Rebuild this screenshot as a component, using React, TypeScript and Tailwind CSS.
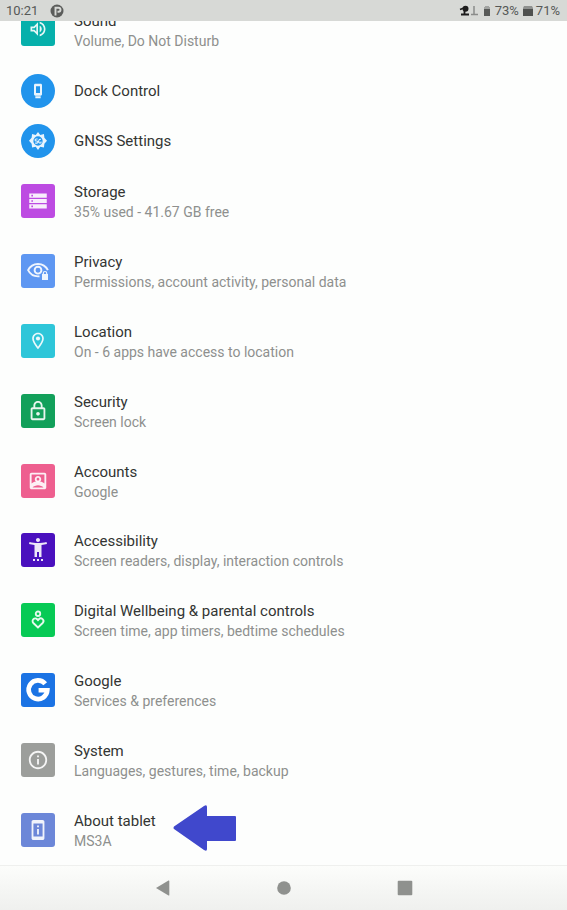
import type { ReactNode } from "react";

type Item = {
  title: string;
  summary: string;
  color: string;
  icon: ReactNode;
  pointed?: boolean;
};

function Glyph({ children, size = "size-5" }: { children: ReactNode; size?: string }) {
  return (
    <svg viewBox="0 0 24 24" className={size} fill="currentColor" aria-hidden="true">
      {children}
    </svg>
  );
}

const volumeIcon = (
  <Glyph>
    <path d="M3 9v6h4l5 5V4L7 9H3zm7-.17v6.34L7.83 13H5v-2h2.83L10 8.83zM16.5 12c0-1.77-1.02-3.29-2.5-4.03v8.05c1.48-.73 2.5-2.25 2.5-4.02zM14 3.23v2.06c2.89.86 5 3.54 5 6.71s-2.11 5.85-5 6.71v2.06c4.01-.91 7-4.49 7-8.77s-2.99-7.86-7-8.77z" />
  </Glyph>
);

const dockIcon = (
  <Glyph size="size-4">
    <path d="M8 23h8v-3H8v3zm8-21.99L8 1c-1.1 0-2 .9-2 2v14c0 1.1.9 2 2 2h8c1.1 0 2-.9 2-2V3c0-1.1-.9-1.99-2-1.99zM15 15H9V5h6v10z" />
  </Glyph>
);

const gnssIcon = (
  <Glyph size="size-[18px]">
    <path
      fillRule="evenodd"
      d="M12 0l3 4 4.900-1.400.6 5 3.500 4-3.500 4-.6 5L15 19.500 12 24l-3-4.500-4.900 1.100-.6-5L0 11.600l3.500-4 .6-5L9 4l3-4zm0 5.800a6.200 6.200 0 100 12.400 6.200 6.200 0 000-12.400z"
    />
    <path
      d="M11.500 9.200H9.500a1.400 1.400 0 000 2.800h1a1.400 1.400 0 010 2.800H8.200M16 10a2 2 0 00-3 1.500v1.500a2 2 0 003 1.500v-2"
      fill="none"
      stroke="currentColor"
      strokeWidth="1.400"
    />
  </Glyph>
);

const storageIcon = (
  <Glyph>
    <path d="M1.500 21h21v-5h-21v5zm2.500-3.500h2v2H4v-2zM1.500 3v5h21V3h-21zM6 6.500H4v-2h2v2zm-4.500 8h21v-5h-21v5zM4 11h2v2H4v-2z" />
  </Glyph>
);

const privacyIcon = (
  <Glyph size="size-6">
    <path
      d="M13.500 17.300c-.5.1-1 .1-1.500.1-4.300 0-8-2.400-9.900-6.200C4 7.400 7.700 5 12 5s8 2.400 9.900 6.200"
      fill="none"
      stroke="currentColor"
      strokeWidth="1.900"
    />
    <circle cx="12" cy="11.200" r="3.400" fill="none" stroke="currentColor" strokeWidth="1.900" />
    <path
      fillRule="evenodd"
      d="M21.300 15v-.8a2.300 2.300 0 00-4.600 0v.8H16v6h6v-6h-.7zm-3.400 0v-.8a1.100 1.100 0 012.200 0v.8h-2.200z"
    />
  </Glyph>
);

const locationIcon = (
  <Glyph>
    <path d="M12 2C8.130 2 5 5.130 5 9c0 5.250 7 13 7 13s7-7.750 7-13c0-3.870-3.130-7-7-7zM7 9c0-2.760 2.240-5 5-5s5 2.240 5 5c0 2.880-2.880 7.190-5 9.880C9.920 16.210 7 11.850 7 9z" />
    <circle cx="12" cy="9" r="2.500" />
  </Glyph>
);

const lockIcon = (
  <Glyph size="size-[22px]">
    <path d="M18 8h-1V6c0-2.760-2.240-5-5-5S7 3.240 7 6v2H6c-1.100 0-2 .9-2 2v10c0 1.100.9 2 2 2h12c1.100 0 2-.9 2-2V10c0-1.100-.9-2-2-2zM9 6c0-1.660 1.340-3 3-3s3 1.340 3 3v2H9V6zm9 14H6V10h12v10zm-6-3c1.100 0 2-.9 2-2s-.9-2-2-2-2 .9-2 2 .9 2 2 2z" />
  </Glyph>
);

const accountIcon = (
  <Glyph size="size-[22px]">
    <path d="M19 3H5c-1.110 0-2 .9-2 2v14c0 1.100.89 2 2 2h14c1.100 0 2-.9 2-2V5c0-1.100-.9-2-2-2zm0 2v9.800c-1.900-1.600-4.400-2.500-7-2.500s-5.100.9-7 2.500V5h14zM6 19c1.400-1.500 3.600-2.500 6-2.500s4.600 1 6 2.500H6z" />
    <path
      fillRule="evenodd"
      d="M12 13.500c2 0 3.500-1.600 3.500-3.500S14 6.500 12 6.500 8.500 8.100 8.500 10s1.500 3.500 3.500 3.500zm0-5c.8 0 1.500.7 1.500 1.500s-.7 1.500-1.500 1.500-1.500-.7-1.500-1.500.7-1.500 1.500-1.500z"
    />
  </Glyph>
);

const accessibilityIcon = (
  <Glyph size="size-6">
    <path d="M20.500 4l.5 2c-1.860.5-3.500.83-5.500 1v12h-2.500v-5h-2v5H8.500V7c-2-.17-3.640-.5-5.500-1l.5-2c2.610.7 5.670 1 8.500 1s5.890-.3 8.500-1zM12 4c1.100 0 2-.9 2-2s-.9-2-2-2-2 .9-2 2 .9 2 2 2zM7 23h2v-2H7v2zm4 0h2v-2h-2v2zm4 0h2v-2h-2v2z" />
  </Glyph>
);

const wellbeingIcon = (
  <Glyph>
    <g fill="none" stroke="currentColor" strokeWidth="2.200">
      <circle cx="12" cy="4.500" r="2.700" />
      <path d="M12 21l-5.600-5.400a3.200 3.200 0 014.600-4.500l1 1 1-1a3.200 3.200 0 014.600 4.500L12 21z" />
    </g>
  </Glyph>
);

const googleIcon = (
  <Glyph size="size-7">
    <path
      d="M18.200 6.700A8 8 0 1020 12.200H12.500"
      fill="none"
      stroke="#fff"
      strokeWidth="4"
    />
  </Glyph>
);

const infoIcon = (
  <Glyph size="size-[22px]">
    <path d="M11 7h2v2h-2zm0 4h2v6h-2zm1-9C6.480 2 2 6.480 2 12s4.480 10 10 10 10-4.480 10-10S17.520 2 12 2zm0 18c-4.410 0-8-3.590-8-8s3.590-8 8-8 8 3.590 8 8-3.590 8-8 8z" />
  </Glyph>
);

const tabletIcon = (
  <Glyph size="size-[22px]">
    <path d="M11 7h2v2h-2zm0 4h2v6h-2zM17 1.010L7 1c-1.100 0-2 .9-2 2v18c0 1.100.9 2 2 2h10c1.100 0 2-.9 2-2V3c0-1.100-.9-1.990-2-1.990zM17 19H7V5h10v14z" />
  </Glyph>
);

const items: Item[] = [
  { title: "Storage", summary: "35% used - 41.67 GB free", color: "bg-[#bd4be2]", icon: storageIcon },
  { title: "Privacy", summary: "Permissions, account activity, personal data", color: "bg-[#5e97f2]", icon: privacyIcon },
  { title: "Location", summary: "On - 6 apps have access to location", color: "bg-[#2ec6d9]", icon: locationIcon },
  { title: "Security", summary: "Screen lock", color: "bg-[#12a05a]", icon: lockIcon },
  { title: "Accounts", summary: "Google", color: "bg-[#ee5f8f]", icon: accountIcon },
  { title: "Accessibility", summary: "Screen readers, display, interaction controls", color: "bg-[#4a10be]", icon: accessibilityIcon },
  { title: "Digital Wellbeing & parental controls", summary: "Screen time, app timers, bedtime schedules", color: "bg-[#07ca55]", icon: wellbeingIcon },
  { title: "Google", summary: "Services & preferences", color: "bg-[#1b73e4]", icon: googleIcon },
  { title: "System", summary: "Languages, gestures, time, backup", color: "bg-[#9c9e9b]", icon: infoIcon },
  { title: "About tablet", summary: "MS3A", color: "bg-[#6c87d8]", icon: tabletIcon, pointed: true },
];

function Tile({ color, children }: { color: string; children: ReactNode }) {
  return (
    <span className={`flex size-[34px] shrink-0 items-center justify-center rounded-[3px] text-white/90 ${color}`}>
      {children}
    </span>
  );
}

function Row({ item }: { item: Item }) {
  return (
    <a href="#" className="flex items-center px-[21px]">
      <Tile color={item.color}>{item.icon}</Tile>
      <span className="ml-[19px] flex flex-col pt-[2px] leading-5">
        <span className="text-[15px] text-[#333533]">{item.title}</span>
        <span className="text-[14px] text-[#8e908e]">{item.summary}</span>
      </span>
      {item.pointed && (
        <svg viewBox="0 0 64 46" className="mb-1 ml-[17px] h-[46px] w-16 shrink-0" fill="#4048cc" aria-hidden="true">
          <path d="M1 21.500q-1 1.500 0 2.500L31 45q3 2 3-1v-8h28q1 0 1-1V12q0-1-1-1H34V2q0-3-3-1z" />
        </svg>
      )}
    </a>
  );
}

function RoundRow({ title, icon }: { title: string; icon: ReactNode }) {
  return (
    <a href="#" className="flex h-[50px] items-center px-[21px]">
      <span className="flex size-[34px] shrink-0 items-center justify-center rounded-full bg-[#2194ec] text-white/90">
        {icon}
      </span>
      <span className="ml-[19px] text-[15px] leading-5 text-[#333533]">{title}</span>
    </a>
  );
}

function StatusBar() {
  return (
    <header className="flex h-[21px] items-center bg-[#d7d9d6] pr-[7px] pl-[6px] text-[13px] leading-5 text-[#565856]">
      <span>10:21</span>
      <svg viewBox="0 0 14 14" className="ml-3 size-[14px]" aria-hidden="true">
        <circle cx="7" cy="7" r="6.500" fill="#5b5d5b" />
        <path d="M5.500 11.500V3.800h3a2 2 0 010 4H7.500" fill="none" stroke="#d7d9d6" strokeWidth="1.900" />
      </svg>
      <span className="ml-auto flex items-center">
        <svg viewBox="0 0 20 12" className="h-3 w-5" aria-hidden="true">
          <circle cx="6.500" cy="3.800" r="3" fill="#1c1c1c" />
          <path d="M1 4.500l4-1.500M5.500 6v3M2 9.500h8" stroke="#1c1c1c" strokeWidth="1.800" />
          <path d="M15 1v8M12 9.500h7" stroke="#8a8c8a" strokeWidth="1.500" />
        </svg>
        <svg viewBox="0 0 8 12" className="ml-1 h-3 w-2" aria-hidden="true">
          <path d="M1 2h1V1h4v1h1v2H1z" fill="#a2a4a2" />
          <path d="M1 4h6v7H1z" fill="#585a58" />
        </svg>
        <span className="ml-1">73%</span>
        <svg viewBox="0 0 12 12" className="ml-[3px] h-3 w-3" aria-hidden="true">
          <path d="M1 3l1-2h8l1 2v1H1z" fill="#8f918f" />
          <path d="M1 4h10v7H1z" fill="#4f514f" />
        </svg>
        <span className="ml-[2px]">71%</span>
      </span>
    </header>
  );
}

function NavBar() {
  return (
    <nav className="flex h-[45px] items-center justify-center gap-[97px] border-t border-[#eff0ee] bg-linear-to-b from-[#fcfdfb] to-[#eff0ee] text-[#8f918e]">
      <button type="button" aria-label="Back">
        <svg viewBox="0 0 24 24" className="size-6" fill="currentColor">
          <path d="M5 12L17.500 4.500q.8-.4.8.5v14q0 .9-.8.500z" />
        </svg>
      </button>
      <button type="button" aria-label="Home">
        <svg viewBox="0 0 24 24" className="size-6" fill="currentColor">
          <circle cx="12" cy="12" r="6.800" />
        </svg>
      </button>
      <button type="button" aria-label="Recent apps">
        <svg viewBox="0 0 24 24" className="size-6" fill="currentColor">
          <rect x="4.700" y="4.700" width="14.600" height="14.600" rx="1" />
        </svg>
      </button>
    </nav>
  );
}

export default function App() {
  return (
    <div className="flex min-h-dvh flex-col bg-[#fdfefd] font-[Roboto,sans-serif]">
      <StatusBar />
      <main className="flex flex-1 flex-col">
        {/* first entry is partly scrolled under the status bar */}
        <a href="#" className="flex h-[45px] items-end overflow-hidden px-[21px]">
          <span className="mb-5 flex">
            <Tile color="bg-[#06b0ab]">{volumeIcon}</Tile>
          </span>
          <span className="mb-[15px] ml-[19px] flex flex-col leading-5">
            <span className="text-[15px] text-[#333533]">Sound</span>
            <span className="text-[14px] text-[#8e908e]">Volume, Do Not Disturb</span>
          </span>
        </a>
        <RoundRow title="Dock Control" icon={dockIcon} />
        <RoundRow title="GNSS Settings" icon={gnssIcon} />
        <div className="grid flex-1 auto-rows-fr">
          {items.map((item) => (
            <Row key={item.title} item={item} />
          ))}
        </div>
      </main>
      <NavBar />
    </div>
  );
}
